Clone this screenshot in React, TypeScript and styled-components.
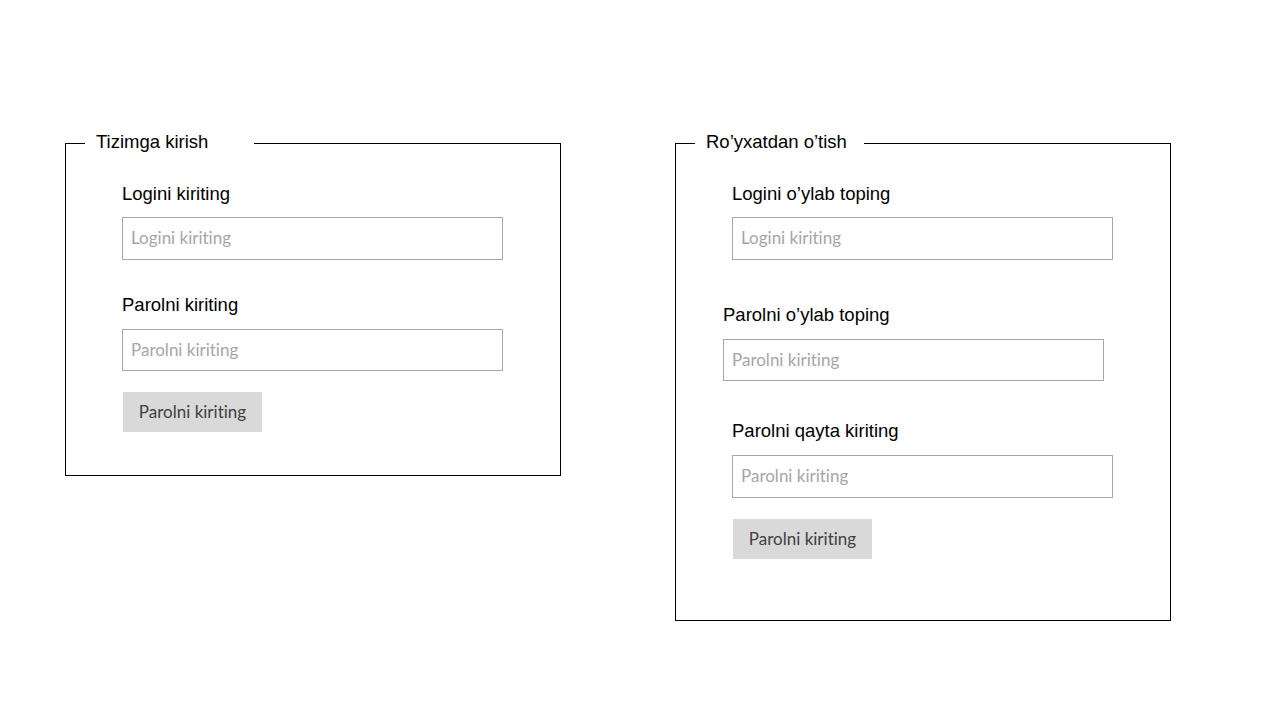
import React from "react";
import styled, { createGlobalStyle } from "styled-components";

const Global = createGlobalStyle`
  html, body { margin: 0; padding: 0; background: #ffffff; }
  body { font-family: "Liberation Sans", Arial, sans-serif; }
  * { box-sizing: border-box; }
`;

const Page = styled.main`
  width: 1280px;
  height: 720px;
  display: flex;
  align-items: flex-start;
  gap: 114px;
  padding: 143px 0 0 65px;
`;

const Panel = styled.section<{ $h: number }>`
  position: relative;
  width: 496px;
  height: ${(p) => p.$h}px;
  border: 1px solid #000000;
  padding: 0 0 0 56px;
  display: flex;
  flex-direction: column;
  align-items: flex-start;
`;

const Legend = styled.h2`
  position: absolute;
  top: -13px;
  left: 19px;
  width: 169px;
  margin: 0;
  padding: 0 0 0 11px;
  background: #ffffff;
  font: 400 18.5px/22px "Liberation Sans", Arial, sans-serif;
  color: #000000;
`;

const Field = styled.label<{ $top: number; $shift?: number }>`
  display: flex;
  flex-direction: column;
  align-items: flex-start;
  margin-top: ${(p) => p.$top}px;
  margin-left: ${(p) => p.$shift ?? 0}px;
`;

const LabelText = styled.span<{ $gap: number }>`
  font: 400 18.5px/22px "Liberation Sans", Arial, sans-serif;
  color: #000000;
  margin-bottom: ${(p) => p.$gap}px;
`;

const Input = styled.input<{ $h?: number }>`
  width: 381px;
  height: ${(p) => p.$h ?? 43}px;
  border: 1px solid #a6a6a6;
  background: #ffffff;
  padding: 0 8px 2px;
  font: 400 17px "Lato", "Open Sans", sans-serif;
  font-variant-ligatures: none;
  color: #404040;
  outline: none;
  &::placeholder { color: #a6a6a6; }
`;

const Button = styled.button<{ $top: number }>`
  margin-top: ${(p) => p.$top}px;
  margin-left: 1px;
  width: 139px;
  height: 40px;
  border: none;
  background: #d9d9d9;
  color: #404040;
  font: 400 17px "Lato", "Open Sans", sans-serif;
  font-variant-ligatures: none;
  padding: 0 0 2px;
  cursor: pointer;
`;

export default function App() {
  return (
    <>
      <Global />
      <Page>
        <Panel $h={333}>
          <Legend>Tizimga kirish</Legend>
          <Field $top={39}>
            <LabelText $gap={12}>Logini kiriting</LabelText>
            <Input placeholder="Logini kiriting" />
          </Field>
          <Field $top={34}>
            <LabelText $gap={13}>Parolni kiriting</LabelText>
            <Input $h={42} placeholder="Parolni kiriting" />
          </Field>
          <Button $top={21}>Parolni kiriting</Button>
        </Panel>
        <Panel $h={478}>
          <Legend>Ro’yxatdan o’tish</Legend>
          <Field $top={39}>
            <LabelText $gap={12}>Logini o’ylab toping</LabelText>
            <Input placeholder="Logini kiriting" />
          </Field>
          <Field $top={44} $shift={-9}>
            <LabelText $gap={13}>Parolni o’ylab toping</LabelText>
            <Input $h={42} placeholder="Parolni kiriting" />
          </Field>
          <Field $top={39}>
            <LabelText $gap={13}>Parolni qayta kiriting</LabelText>
            <Input placeholder="Parolni kiriting" />
          </Field>
          <Button $top={21}>Parolni kiriting</Button>
        </Panel>
      </Page>
    </>
  );
}
